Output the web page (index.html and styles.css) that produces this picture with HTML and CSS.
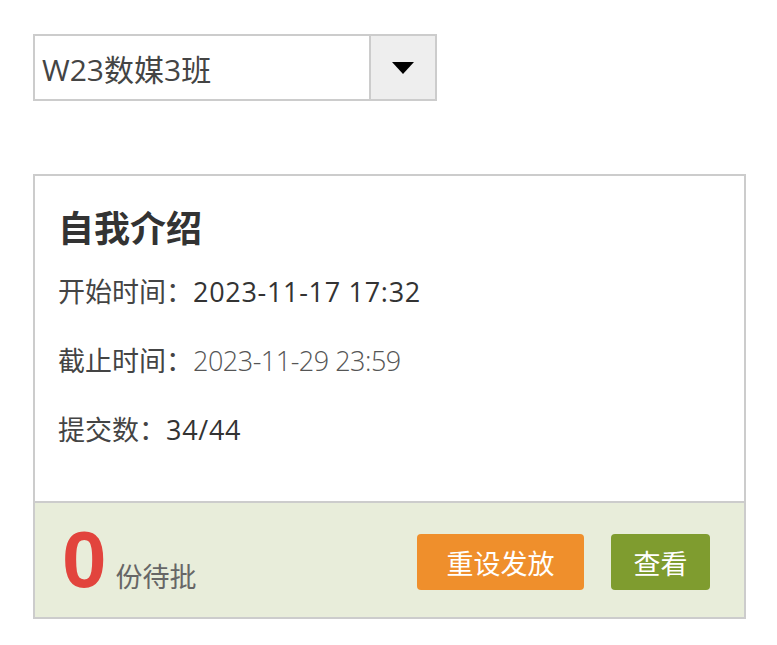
FILE: index.html
```html
<!DOCTYPE html>
<html lang="zh-CN">
<head>
    <meta charset="UTF-8">
    <meta name="viewport" content="width=device-width, initial-scale=1.0">
    <title>作业</title>
    <link rel="stylesheet" href="styles.css">
</head>
<body>
    <div id="page">

        <div class="class-select">
            <div class="class-name">W23数媒3班</div>
            <div class="class-toggle">
                <svg width="22" height="12" viewBox="0 0 22 12"><path d="M0 0 H22 L11 12 Z" fill="#000"/></svg>
            </div>
        </div>

        <div class="task-card">
            <div class="task-body">
                <h2 class="task-title">自我介绍</h2>
                <div class="task-row">开始时间：<span class="start">2023-11-17 17:32</span></div>
                <div class="task-row">截止时间：<span class="deadline">2023-11-29 23:59</span></div>
                <div class="task-row">提交数：<span class="count">34/44</span></div>
            </div>
            <div class="task-footer">
                <div class="pending">
                    <span class="pending-num">0</span>
                    <span class="pending-label">份待批</span>
                </div>
                <div class="actions">
                    <button class="btn btn-orange">重设发放</button>
                    <button class="btn btn-green">查看</button>
                </div>
            </div>
        </div>

    </div>
</body>
</html>
```

FILE: styles.css
```css
body {
    margin: 0;
    padding: 0;
    background-color: #ffffff;
    font-family: "Open Sans", "Noto Sans CJK SC", sans-serif;
    color: #333333;
}

#page {
    padding: 34px 31px 0 33px;
}

.class-select {
    display: flex;
    width: 404px;
    height: 67px;
    box-sizing: border-box;
    border: 2px solid #cccccc;
}

.class-name {
    flex: 1;
    display: flex;
    align-items: center;
    padding-left: 7px;
    font-size: 30px;
    color: #444444;
}

.class-toggle {
    width: 64px;
    display: flex;
    align-items: center;
    justify-content: center;
    background-color: #eeeeee;
    border-left: 2px solid #cccccc;
}

.task-card {
    margin-top: 73px;
    width: 713px;
    box-sizing: border-box;
    border: 2px solid #cccccc;
}

.task-body {
    padding: 29px 23px 54px;
}

.task-title {
    margin: 0 0 22px;
    font-size: 36px;
    font-weight: bold;
    line-height: 48px;
    color: #333333;
}

.task-row {
    font-size: 27px;
    line-height: 34px;
    color: #444444;
    margin-bottom: 35px;
}

.task-row:last-child {
    margin-bottom: 0;
}

.start, .count {
    color: #333333;
    letter-spacing: 0.7px;
}

.deadline {
    font-weight: 300;
    color: #555555;
    letter-spacing: -0.5px;
}

.task-footer {
    display: flex;
    justify-content: space-between;
    align-items: flex-start;
    height: 116px;
    box-sizing: border-box;
    padding: 31px 34px 0 27px;
    background-color: #e8edda;
    border-top: 2px solid #cccccc;
}

.pending {
    display: flex;
    align-items: baseline;
}

.pending-num {
    font-family: "Liberation Sans", Arial, sans-serif;
    font-size: 80px;
    font-weight: bold;
    line-height: 1;
    color: #e2443d;
    margin-top: -14px;
}

.pending-label {
    margin-left: 9px;
    font-size: 27px;
    color: #666666;
}

.actions {
    display: flex;
    gap: 27px;
}

.btn {
    height: 56px;
    border: none;
    border-radius: 4px;
    padding: 0;
    font-family: "Open Sans", "Noto Sans CJK SC", sans-serif;
    font-size: 27px;
    color: #ffffff;
    cursor: pointer;
}

.btn-orange {
    width: 167px;
    background-color: #ef8f2c;
}

.btn-green {
    width: 99px;
    background-color: #7f9c2f;
}
```
